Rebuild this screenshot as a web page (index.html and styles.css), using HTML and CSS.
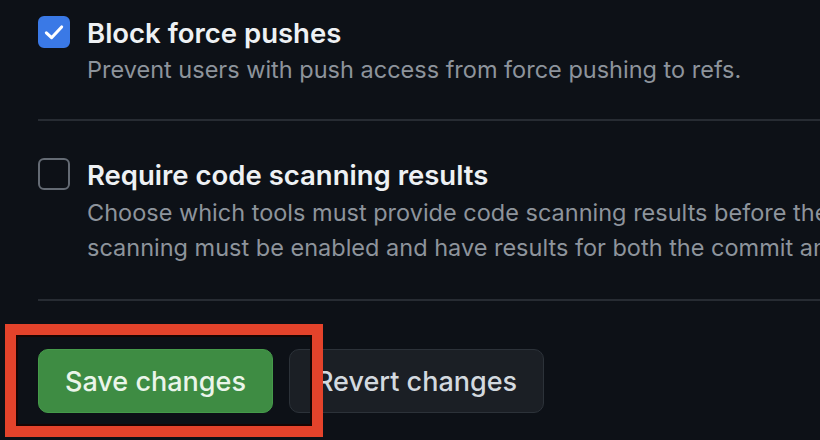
FILE: index.html
```html
<!DOCTYPE html>
<html lang="en">
<head>
<meta charset="utf-8">
<title>Branch protection</title>
<link rel="stylesheet" href="styles.css">
</head>
<body>
<div class="page">
  <div class="option option-first">
    <span class="checkbox checked">
      <svg viewBox="0 0 16 16" width="26" height="26"><path d="M3.3 8.5 L6.5 11.5 L12.7 4.9" fill="none" stroke="#ffffff" stroke-width="1.9" stroke-linecap="round" stroke-linejoin="round"/></svg>
    </span>
    <div class="option-text">
      <div class="title">Block force pushes</div>
      <div class="desc">Prevent users with push access from force pushing to refs.</div>
    </div>
  </div>
  <div class="option option-second">
    <span class="checkbox"></span>
    <div class="option-text">
      <div class="title">Require code scanning results</div>
      <div class="desc">Choose which tools must provide code scanning results before the reference is updated. When configured, code<br>scanning must be enabled and have results for both the commit and the reference being updated.</div>
    </div>
  </div>
  <div class="actions">
    <button class="btn btn-primary">Save changes</button>
    <button class="btn btn-default">Revert changes</button>
  </div>
  <div class="highlight"></div>
</div>
</body>
</html>
```
FILE: styles.css
```css
html, body {
  margin: 0;
  padding: 0;
  background: #0d1117;
  overflow: hidden;
}
body {
  width: 820px;
  height: 440px;
  font-family: Inter, "Liberation Sans", Arial, sans-serif;
  color: #e6edf3;
}
.page {
  position: relative;
  width: 1700px;
  height: 440px;
  padding-left: 38px;
  box-sizing: border-box;
}
.option {
  display: flex;
  gap: 17px;
  align-items: flex-start;
  border-bottom: 2px solid #272c33;
}
.option-first {
  padding-top: 15px;
  padding-bottom: 32px;
}
.option-second {
  padding-top: 36px;
  padding-bottom: 34px;
}
.option-second .desc {
  margin-top: 2px;
}
.checkbox {
  flex: none;
  width: 32px;
  height: 32px;
  margin-top: 1px;
  box-sizing: border-box;
  border-radius: 6px;
  border: 2px solid #646b74;
  display: flex;
  align-items: center;
  justify-content: center;
}
.checkbox.checked {
  background: #3a79e6;
  border-color: #3a79e6;
}
.title {
  font-size: 27.5px;
  font-weight: 600;
  line-height: 36px;
  color: #eef1f4;
}
.desc {
  font-size: 23.5px;
  line-height: 35px;
  color: #8d949c;
  margin-top: 1px;
  white-space: nowrap;
}
.actions {
  display: flex;
  gap: 16px;
  padding-top: 48px;
}
.btn {
  height: 64px;
  padding: 0 26px;
  border-radius: 10px;
  font-family: Inter, "Liberation Sans", Arial, sans-serif;
  font-size: 27px;
  font-weight: 500;
  cursor: pointer;
}
.btn-primary {
  background: #3e8c43;
  border: 1px solid #459a4a;
  color: #eaf5ea;
}
.btn-default {
  background: #1b1f25;
  border: 1px solid #2c3239;
  color: #d3d9df;
}
.highlight {
  position: absolute;
  left: 5px;
  top: 324px;
  width: 318px;
  height: 113px;
  box-sizing: border-box;
  border: 11px solid #e4432b;
  box-shadow: inset 0 0 0 2px #1a0503;
  background: transparent;
  pointer-events: none;
}
```
